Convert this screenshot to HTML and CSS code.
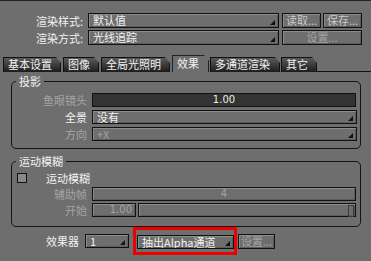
FILE: index.html
```html
<!DOCTYPE html>
<html lang="zh-CN">
<head>
    <meta charset="UTF-8">
    <title>渲染设置</title>
    <link rel="stylesheet" href="styles.css">
</head>
<body>
    <div class="app">
        <div class="top-row">
            <span class="lbl">渲染样式:</span>
            <div class="select main"><span>默认值</span><i class="arrow"></i></div>
            <div class="btn w1">读取...</div>
            <div class="btn w2">保存...</div>
        </div>
        <div class="top-row">
            <span class="lbl">渲染方式:</span>
            <div class="select main"><span>光线追踪</span><i class="arrow"></i></div>
            <div class="btn wide off">设置...</div>
        </div>

        <div class="tabs">
            <div class="tab t1">基本设置</div>
            <div class="tab t2">图像</div>
            <div class="tab t3">全局光照明</div>
            <div class="tab t4 active">效果</div>
            <div class="tab t5">多通道渲染</div>
            <div class="tab t6">其它</div>
            <div class="tab-rest"></div>
        </div>

        <fieldset class="group g1">
            <legend>投影</legend>
            <div class="field-row">
                <span class="flbl off">鱼眼镜头</span>
                <div class="num dark">1.00</div>
            </div>
            <div class="field-row">
                <span class="flbl">全景</span>
                <div class="select full"><span>没有</span><i class="arrow"></i></div>
            </div>
            <div class="field-row">
                <span class="flbl off">方向</span>
                <div class="select full off"><span>+X</span><i class="arrow"></i></div>
            </div>
        </fieldset>

        <fieldset class="group g2">
            <legend>运动模糊</legend>
            <div class="check-row">
                <span class="check"></span>
                <span class="check-lbl">运动模糊</span>
            </div>
            <div class="field-row first">
                <span class="flbl off">辅助帧</span>
                <div class="num off">4</div>
            </div>
            <div class="field-row tight">
                <span class="flbl off">开始</span>
                <div class="num small off">1.00</div>
                <div class="slider"><i class="thumb"></i></div>
            </div>
        </fieldset>

        <div class="bottom-row">
            <span class="blbl">效果器</span>
            <div class="select s1"><span>1</span><i class="arrow"></i></div>
            <div class="hilite">
                <div class="select s2"><span>抽出Alpha通道</span><i class="arrow"></i></div>
            </div>
            <div class="btn w3 off">设置...</div>
        </div>
    </div>
</body>
</html>
```

FILE: styles.css
```css
body {
    margin: 0;
    background-color: #6e6e6e;
    font-family: "Noto Sans CJK SC", "DejaVu Sans", sans-serif;
    font-size: 11px;
    color: #f2f2f2;
}
.app {
    width: 371px;
    height: 261px;
    box-sizing: border-box;
    border-top: 1px solid #222;
    padding-top: 12px;
    overflow: hidden;
}
.top-row {
    display: flex;
    align-items: center;
    height: 15px;
    margin-bottom: 2px;
}
.lbl {
    width: 83px;
    text-align: right;
    margin-right: 5px;
    line-height: 14px;
}
.select {
    position: relative;
    box-sizing: border-box;
    height: 14px;
    border: 1px solid #111;
    box-shadow: inset 1px 1px 0 #8c8c8c, inset -1px -1px 0 #5c5c5c;
    line-height: 12px;
    padding-left: 4px;
    white-space: nowrap;
    overflow: hidden;
}
.select.main {
    width: 191px;
    height: 15px;
}
.arrow {
    position: absolute;
    right: 3px;
    bottom: 2px;
    width: 0;
    height: 0;
    border-left: 5px solid transparent;
    border-bottom: 5px solid #111;
}
.btn {
    box-sizing: border-box;
    height: 15px;
    border: 1px solid #111;
    box-shadow: inset 1px 1px 0 #8c8c8c, inset -1px -1px 0 #5c5c5c;
    text-align: center;
    line-height: 12px;
    color: #c8c8c8;
}
.btn.w1 { width: 39px; margin-left: 3px; }
.btn.w2 { width: 39px; margin-left: 2px; }
.btn.wide { width: 80px; margin-left: 3px; }
.off { color: #a4a4a4; }

.tabs {
    display: flex;
    align-items: flex-end;
    height: 17px;
    margin-top: 10px;
    padding-left: 3px;
}
.tab {
    box-sizing: border-box;
    height: 15px;
    margin-right: 2px;
    padding: 0 7px 0 4px;
    border: 1px solid #111;
    border-bottom: none;
    clip-path: polygon(0 0, calc(100% - 5px) 0, 100% 6px, 100% 100%, 0 100%);
    background: linear-gradient(#5a5a5a, #1c1c1c);
    line-height: 13px;
    white-space: nowrap;
}
.tab.active {
    height: 17px;
    background: #6e6e6e;
    border-color: #222;
    line-height: 15px;
    padding-bottom: 1px;
}
.t1 { width: 58px; }
.t2 { width: 36px; }
.t3 { width: 69px; }
.t4 { width: 37px; margin-right: 1px; }
.t5 { width: 70px; margin-right: 1px; }
.t6 { width: 36px; margin-right: 0; }
.tab-rest {
    flex: 1;
    border-bottom: 1px solid #111;
}

.group {
    margin: 4px 10px 0 11px;
    padding: 3px 4px 7px 0;
    border: 1px solid #151515;
    border-radius: 5px;
}
.group legend {
    margin-left: 4px;
    padding: 0 3px;
    line-height: 11px;
}
.g2 {
    margin-top: 7px;
    padding-top: 6px;
    padding-bottom: 9px;
}
.field-row {
    display: flex;
    align-items: center;
    height: 14px;
    margin-top: 3px;
}
.field-row.first { margin-top: 4px; }
.field-row.tight { margin-top: 2px; }
.flbl {
    width: 75px;
    text-align: right;
    margin-right: 5px;
    line-height: 14px;
}
.num {
    flex: 1;
    box-sizing: border-box;
    height: 14px;
    border: 1px solid #111;
    box-shadow: inset 1px 1px 0 #8c8c8c, inset -1px -1px 0 #5c5c5c;
    text-align: center;
    line-height: 12px;
    font-family: "DejaVu Sans", sans-serif;
    font-size: 10px;
}
.num.dark {
    background: #333;
    box-shadow: none;
    color: #eee;
}
.num.small {
    flex: none;
    width: 44px;
    text-align: right;
    padding-right: 3px;
}
.select.full {
    flex: 1;
    margin-right: -1px;
}
.slider {
    flex: 1;
    position: relative;
    box-sizing: border-box;
    height: 14px;
    margin-left: 2px;
    border: 1px solid #111;
    box-shadow: inset 1px 1px 0 #8c8c8c, inset -1px -1px 0 #5c5c5c;
}
.thumb {
    position: absolute;
    right: 1px;
    top: 1px;
    width: 4px;
    height: 10px;
    border: 1px solid #3a3a3a;
}
.check-row {
    display: flex;
    align-items: center;
    height: 10px;
}
.check {
    box-sizing: border-box;
    width: 10px;
    height: 10px;
    margin-left: 5px;
    border: 1px solid #111;
    background: #888;
}
.check-lbl {
    margin-left: 19px;
    line-height: 10px;
}

.bottom-row {
    display: flex;
    align-items: center;
    margin-top: 0;
    height: 28px;
}
.blbl {
    width: 79px;
    text-align: right;
    margin-right: 6px;
}
.select.s1 {
    width: 44px;
    height: 14px;
}
.hilite {
    margin-left: 4px;
    border: 3px solid #e00;
    padding: 5px 0 3px 1px;
}
.select.s2 {
    width: 97px;
    height: 14px;
}
.btn.w3 {
    width: 37px;
    margin-left: 1px;
}
```
